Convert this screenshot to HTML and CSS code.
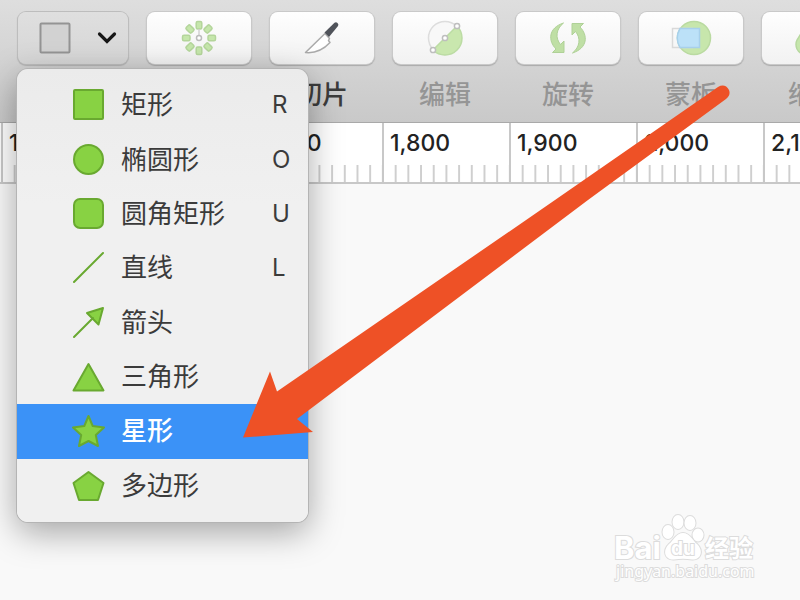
FILE: index.html
```html
<!DOCTYPE html>
<html lang="zh-CN">
  <head>
    <meta charset="UTF-8" />
    <meta name="viewport" content="width=device-width, initial-scale=1.0" />
    <title>星形</title>
    <link rel="stylesheet" href="styles.css">
  </head>
  <body>
    <header class="toolbar">
      <div class="tool tool-shape">
        <button type="button" class="tool-button shape-button" aria-label="形状" aria-haspopup="menu">
          <svg width="32" height="32" viewBox="0 0 32 32">
            <rect x="1.5" y="1.5" width="29" height="29" rx="1" fill="#d2d2d2" stroke="#949494" stroke-width="2" />
          </svg>
          <svg width="20" height="14" viewBox="0 0 20 14">
            <path d="M2.5 3 L10 10.500 L17.500 3" fill="none" stroke="#161616" stroke-width="3.200" stroke-linecap="round" />
          </svg>
        </button>

        <!-- Shape menu -->
        <div class="menu" role="menu">
          <button type="button" class="menu-item" role="menuitem">
            <svg class="shape" viewBox="0 0 36 36"><rect x="3" y="3" width="29" height="29" rx="1" /></svg>
            <span>矩形</span><kbd>R</kbd>
          </button>
          <button type="button" class="menu-item" role="menuitem">
            <svg class="shape" viewBox="0 0 36 36"><circle cx="17.500" cy="17.500" r="14.500" /></svg>
            <span>椭圆形</span><kbd>O</kbd>
          </button>
          <button type="button" class="menu-item" role="menuitem">
            <svg class="shape" viewBox="0 0 36 36"><rect x="3" y="3" width="29" height="29" rx="6" /></svg>
            <span>圆角矩形</span><kbd>U</kbd>
          </button>
          <button type="button" class="menu-item" role="menuitem">
            <svg class="shape" viewBox="0 0 36 36"><path d="M3 32 L32 3" /></svg>
            <span>直线</span><kbd>L</kbd>
          </button>
          <button type="button" class="menu-item" role="menuitem">
            <svg class="shape" viewBox="0 0 36 36"><path d="M3 32 L22 13 M32 3 L16 8 L27.500 19.500 Z" /></svg>
            <span>箭头</span>
          </button>
          <button type="button" class="menu-item" role="menuitem">
            <svg class="shape" viewBox="0 0 36 36"><path d="M17.500 5 L32.500 31.500 H2.500 Z" /></svg>
            <span>三角形</span>
          </button>
          <button type="button" class="menu-item selected" role="menuitem">
            <svg class="shape" viewBox="0 0 36 36"><path d="M17.500 3 L21.700 13 L33 14.500 L24.800 22 L27 33 L17.500 28 L8 33 L10.200 22 L2 14.500 L13.300 13 Z" /></svg>
            <span>星形</span>
          </button>
          <button type="button" class="menu-item" role="menuitem">
            <svg class="shape" viewBox="0 0 36 36"><path d="M17.500 4 L32.500 15 L27 32 H8 L2.500 15 Z" /></svg>
            <span>多边形</span>
          </button>
        </div>
      </div>

      <div class="tool">
        <button type="button" class="tool-button" aria-label="图案">
          <svg width="36" height="36" viewBox="-18 -18 36 36">
            <g fill="#c5e6ab" stroke="#b4d59b" stroke-width="1.500">
              <rect id="petal" x="-2.800" y="-16.500" width="5.600" height="7.500" rx="1.500" />
              <use href="#petal" transform="rotate(45)" />
              <use href="#petal" transform="rotate(90)" />
              <use href="#petal" transform="rotate(135)" />
              <use href="#petal" transform="rotate(180)" />
              <use href="#petal" transform="rotate(225)" />
              <use href="#petal" transform="rotate(270)" />
              <use href="#petal" transform="rotate(315)" />
            </g>
            <path d="M0 -9 V-3" stroke="#d2d2d2" stroke-width="1.500" />
            <circle r="2.500" fill="#fff" stroke="#bcbcbc" stroke-width="1.500" />
          </svg>
        </button>
      </div>

      <div class="tool">
        <button type="button" class="tool-button" aria-labelledby="slice">
          <svg width="36" height="36" viewBox="0 0 36 36">
            <path d="M21 13.500 L25.500 18.500 L24.500 20.500 L26 22.500 C20 29 12 33.500 1.500 32.500 Z" fill="#fff" stroke="#aaa" stroke-width="1.500" stroke-linejoin="round" />
            <path d="M20.500 12.500 L30.500 2.700 Q32 1.500 33.500 3 Q35 4.500 34 6 L25 17 Z" fill="#50535a" />
          </svg>
        </button>
        <span class="tool-label active" id="slice">切片</span>
      </div>

      <div class="tool">
        <button type="button" class="tool-button" aria-labelledby="edit">
          <svg width="38" height="38" viewBox="0 0 38 38">
            <circle cx="19" cy="19" r="16.500" fill="#f8f8f8" stroke="#ddd" stroke-width="1.500" />
            <path d="M31 7 A16.500 16.500 0 0 1 7 31 Z" fill="#c9e7ae" stroke="#bcdca4" stroke-width="1.500" />
            <g fill="#fff" stroke="#bebebe" stroke-width="1.500">
              <circle cx="7" cy="31" r="2.600" />
              <circle cx="19" cy="19" r="2.600" />
              <circle cx="31" cy="7" r="2.600" />
            </g>
          </svg>
        </button>
        <span class="tool-label" id="edit">编辑</span>
      </div>

      <div class="tool">
        <button type="button" class="tool-button" aria-labelledby="rotate">
          <svg width="38" height="34" viewBox="0 0 38 34">
            <g fill="#bfdfa5" stroke="#afd197" stroke-width="1" stroke-linejoin="round">
              <path id="turn" d="M14.500 2 C-1 7 -1 20 7 28 L3.500 31.500 H15 V20 L11.500 23.500 C6 17 7 8 14.500 2 Z" />
              <use href="#turn" transform="rotate(180 19 17)" />
            </g>
          </svg>
        </button>
        <span class="tool-label" id="rotate">旋转</span>
      </div>

      <div class="tool">
        <button type="button" class="tool-button" aria-labelledby="mask">
          <svg width="42" height="38" viewBox="0 0 42 38">
            <circle cx="24" cy="19" r="16.500" fill="#c7e6ac" stroke="#badaa1" stroke-width="1.500" />
            <rect x="2.500" y="9.500" width="20" height="19" fill="none" stroke="#d9d9d9" stroke-width="1.500" />
            <path d="M10 9.500 H29.500 V28.500 H10 Q4.500 19 10 9.500 Z" fill="#bce1f8" stroke="#a7d0eb" stroke-width="1.500" />
          </svg>
        </button>
        <span class="tool-label" id="mask">蒙板</span>
      </div>

      <div class="tool">
        <button type="button" class="tool-button" aria-labelledby="scale">
          <svg width="38" height="38" viewBox="0 0 38 38">
            <path d="M2 30 Q0 25 2 21 L12 5 L33 20 L17 32 Q6 38 2 30 Z" fill="#c5e6ab" stroke="#b7d89f" stroke-width="1.500" />
          </svg>
        </button>
        <span class="tool-label" id="scale">缩放</span>
      </div>
    </header>

    <div class="ruler">
      <span class="mark">1,500</span>
      <span class="mark">1,600</span>
      <span class="mark">1,700</span>
      <span class="mark">1,800</span>
      <span class="mark">1,900</span>
      <span class="mark">2,000</span>
      <span class="mark">2,100</span>
    </div>

    <main class="canvas">
      <!-- Watermark -->
      <svg class="watermark" width="150" height="76" viewBox="0 0 150 76">
        <g class="logo">
          <text x="5" y="47" font-size="31" font-weight="700">Bai</text>
          <ellipse cx="59" cy="20" rx="5.500" ry="7" />
          <ellipse cx="69" cy="10" rx="5.500" ry="7" />
          <ellipse cx="81" cy="11" rx="5.500" ry="7" />
          <ellipse cx="89" cy="23" rx="5.500" ry="6.500" />
          <path d="M74 21 C81 21 83 28 88 32 C95 39 92 48 83 47.500 C77 46.500 71 46.500 65 47.500 C56 48 53 39 60 32 C65 28 67 21 74 21 Z" />
          <text x="62" y="43" font-size="19" font-weight="700">du</text>
          <text class="cjk" x="96" y="45" font-size="24" font-weight="700">经验</text>
          <text class="address" x="7" y="65" font-size="16">jingyan.baidu.com</text>
        </g>
      </svg>
    </main>

    <!-- Pointer over the selected row -->
    <svg class="pointer" width="500" height="360" viewBox="240 80 500 360">
      <path d="M243 437.500 L270 371.500 L277 391.500 L555 200 L718 87 Q725 83 729 90 Q731 95 726 99 L588 200 L297 419 L313 432 Z" fill="#ee5126" />
    </svg>
  </body>
</html>
```

FILE: styles.css
```css
* {
  box-sizing: border-box;
}

body {
  margin: 0;
  min-height: 100vh;
  display: flex;
  flex-direction: column;
  overflow: hidden;
  background-color: #f9f9f9;
  font-family: Inter, "Noto Sans CJK SC", sans-serif;
}

button {
  font: inherit;
  color: inherit;
  border: none;
  padding: 0;
}

.toolbar {
  position: relative;
  z-index: 1;
  display: flex;
  gap: 19px;
  padding: 12px 0 7px 18px;
  background: linear-gradient(#dedede, #c9c9c9);
  border-bottom: 1px solid #a9a9a9;
}

.tool {
  flex: none;
  width: 104px;
  display: flex;
  flex-direction: column;
  align-items: center;
  gap: 11px;
}

.tool-shape {
  position: relative;
  width: 110px;
}

.tool-button {
  width: 100%;
  height: 52px;
  display: flex;
  align-items: center;
  justify-content: center;
  border-radius: 8px;
  background: linear-gradient(#fefefe, #f2f2f2);
  box-shadow: 0 0 0 1px #c9c9c9, 0 1px 1px 1px #aaa;
}

.shape-button {
  justify-content: space-between;
  padding: 0 11px 0 21px;
  background: linear-gradient(#dfdfdf, #d6d6d6);
  box-shadow: 0 0 0 1px #bdbdbd, 0 1px 1px 1px #b3b3b3;
}

.tool-label {
  line-height: 40px;
  font-size: 26px;
  font-weight: 500;
  color: #959595;
}

.tool-label.active {
  color: #3c3c3c;
}

.menu {
  position: absolute;
  top: 57px;
  left: -1px;
  width: 291px;
  height: 453px;
  display: grid;
  grid-auto-rows: 1fr;
  padding: 9px 0;
  border-radius: 11px;
  background: linear-gradient(#ebebeb, #f0f0f0 30%);
  box-shadow: 0 0 0 1px #b4b4b4, 0 10px 34px rgba(0, 0, 0, 0.35);
}

.menu-item {
  display: grid;
  grid-template-columns: 36px 1fr 36px;
  column-gap: 14px;
  align-items: center;
  padding-left: 54px;
  background: none;
  font-size: 26px;
  line-height: 38px;
  text-align: left;
  color: #3b3b3b;
}

.menu-item kbd {
  font-family: inherit;
  font-size: 24px;
}

.menu-item.selected {
  background-color: #3b92f7;
  color: #fff;
  font-weight: 500;
}

.shape {
  width: 36px;
  height: 36px;
  fill: #88d243;
  stroke: #69a930;
  stroke-width: 2;
  stroke-linejoin: round;
  stroke-linecap: round;
}

.ruler {
  display: flex;
  height: 61px;
  padding-left: 1px;
  overflow: hidden;
  background-color: #fff;
  border-bottom: 2px solid #c8c8c8;
}

.mark {
  flex: none;
  width: 127px;
  padding: 5px 0 0 6px;
  border-left: 2px solid #c8c8c8;
  font-size: 23px;
  font-weight: 500;
  line-height: 30px;
  color: #222;
  background: linear-gradient(to right, #cfcfcf 2px, transparent 2px) 0 100% / 10% 17px repeat-x;
  background-origin: border-box;
}

.canvas {
  flex: 1;
  display: flex;
  align-items: flex-end;
  justify-content: flex-end;
  padding: 0 41px 12px 0;
}

.logo {
  fill: #fff;
  stroke: #dcdcdc;
  stroke-width: 2;
  paint-order: stroke;
  font-family: Inter, sans-serif;
}

.cjk {
  font-family: "Noto Sans CJK SC", sans-serif;
}

.address {
  font-family: "Noto Sans", sans-serif;
}

.pointer {
  position: absolute;
  top: 80px;
  left: 240px;
  z-index: 2;
  pointer-events: none;
}
```
